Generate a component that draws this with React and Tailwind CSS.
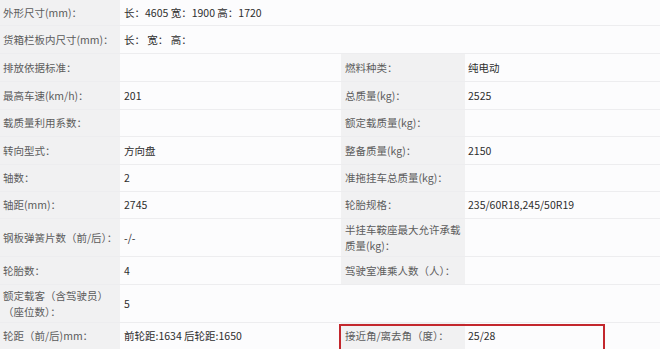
import React from "react";

const font = { fontFamily: '"Noto Sans CJK SC", "Noto Sans", sans-serif' };

function Label({ children, w = "w-[120px]", pl = "pl-[3px]" }) {
  return (
    <div className={`${w} shrink-0 bg-[#f1f1f2] ${pl} pr-[2px] flex items-center text-[#5c5c5c] leading-[16px]`}>
      <div>{children}</div>
    </div>
  );
}

function Value({ children, w = "w-[221px]", pl = "pl-[4px]" }) {
  return (
    <div className={`${w} shrink-0 ${pl} flex items-center text-[#2e2e2e] whitespace-pre`}>
      <div>{children}</div>
    </div>
  );
}

function Row({ h, children }) {
  return (
    <div className={`flex ${h} border-b border-[#ededef]`}>{children}</div>
  );
}

export default function App() {
  const rows = [
    { h: "h-[26px]", l: "外形尺寸(mm)：", v: "长：4605 宽：1900 高：1720", full: true },
    { h: "h-[28px]", l: "货箱栏板内尺寸(mm)：", v: "长： 宽： 高：", full: true },
    { h: "h-[28px]", l: "排放依据标准：", v: "", rl: "燃料种类：", rv: "纯电动" },
    { h: "h-[28px]", l: "最高车速(km/h)：", v: "201", rl: "总质量(kg)：", rv: "2525" },
    { h: "h-[27px]", l: "载质量利用系数：", v: "", rl: "额定载质量(kg)：", rv: "" },
    { h: "h-[28px]", l: "转向型式：", v: "方向盘", rl: "整备质量(kg)：", rv: "2150" },
    { h: "h-[27px]", l: "轴数：", v: "2", rl: "准拖挂车总质量(kg)：", rv: "" },
    { h: "h-[27px]", l: "轴距(mm)：", v: "2745", rl: "轮胎规格：", rv: "235/60R18,245/50R19" },
    { h: "h-[38px]", l: "钢板弹簧片数（前/后）：", v: "-/-", rl: "半挂车鞍座最大允许承载质量(kg)：", rv: "" },
    { h: "h-[28px]", l: "轮胎数：", v: "4", rl: "驾驶室准乘人数（人）：", rv: "" },
    { h: "h-[38px]", l: "额定载客（含驾驶员）（座位数）：", v: "5", empty: true },
    { h: "h-[27px]", l: "轮距（前/后)mm：", v: "前轮距:1634 后轮距:1650", rl: "接近角/离去角（度）：", rv: "25/28" },
  ];
  return (
    <div className="relative w-[660px] h-[349px] overflow-hidden bg-[#fcfcfd] text-[10.5px]" style={font}>
      {rows.map((r, i) => (
        <Row key={i} h={r.h}>
          <Label>{r.l}</Label>
          {r.full || r.empty ? (
            <Value w="flex-1">{r.v}</Value>
          ) : (
            <>
              <Value>{r.v}</Value>
              <Label w="w-[124px]" pl="pl-[4px]">{r.rl}</Label>
              <Value w="flex-1" pl="pl-[3px]">{r.rv}</Value>
            </>
          )}
        </Row>
      ))}
      <div className="absolute left-[339px] top-[324px] w-[266px] h-[40px] border-2 border-[#c3272d]" />
    </div>
  );
}
